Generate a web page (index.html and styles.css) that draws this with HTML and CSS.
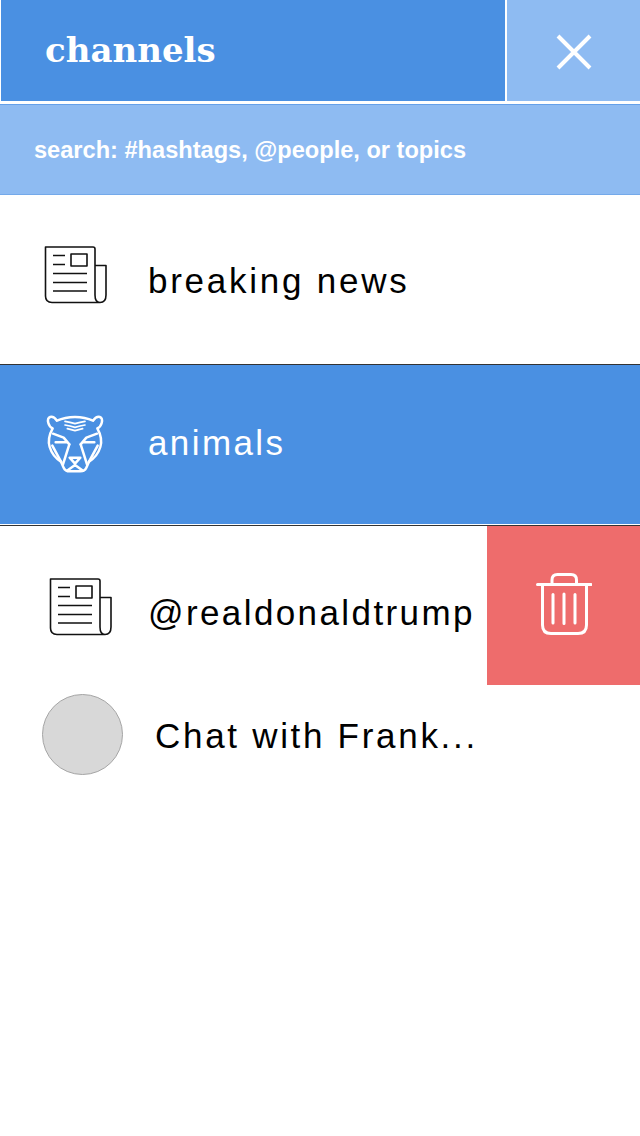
FILE: index.html
```html
<!DOCTYPE html>
<html lang="en">
<head>
    <meta charset="UTF-8">
    <meta name="viewport" content="width=device-width, initial-scale=1.0">
    <title>Channels</title>
    <link rel="stylesheet" href="styles.css">
</head>
<body>

    <header class="top-bar">
        <h1 class="title">channels</h1>
        <button class="close-btn" aria-label="Close">
            <svg width="36" height="36" viewBox="0 0 36 36"><path d="M2 2 L34 34 M34 2 L2 34" stroke="#fff" stroke-width="4" fill="none"/></svg>
        </button>
    </header>

    <div class="search-bar">search: #hashtags, @people, or topics</div>

    <ul class="channel-list">
        <li class="channel channel-news">
            <svg class="icon-news" width="64" height="60" viewBox="0 0 64 60">
                <use href="#news"/>
            </svg>
            <span class="channel-name">breaking news</span>
        </li>
        <li class="channel channel-active">
            <svg class="icon-tiger" width="80" height="75" viewBox="0 0 240 225" fill="none" stroke="#fff" stroke-width="7.5" stroke-linejoin="round" stroke-linecap="round">
                <path d="M66 47 C52 28 34 34 40 54 C42 62 46 67 53 70 C43 88 38 106 44 126 C50 146 62 160 78 170 L86 188 Q91 199 104 199 L136 199 Q149 199 154 188 L162 170 C178 160 190 146 196 126 C202 106 197 88 187 70 C194 67 198 62 200 54 C206 34 188 28 174 47 C142 32 98 32 66 47 Z"/>
                <path d="M90 49 L105 52 L120 56 L135 52 L150 49 M90 60 L105 63 L120 67 L135 63 L150 60 M97 71 L120 77 L143 71" stroke-width="5"/>
                <path d="M54 86 L86 98 L103 118 M186 86 L154 98 L137 118"/>
                <path d="M103 118 L84 178 M137 118 L156 178 M62 112 L94 112 M178 112 L146 112 M52 122 L78 170 M188 122 L162 170"/>
                <path d="M104 158 L136 158 L120 176 Z M96 197 L120 180 L144 197"/>
            </svg>
            <span class="channel-name">animals</span>
        </li>
        <li class="channel channel-swiped">
            <svg class="icon-news" width="64" height="60" viewBox="0 0 64 60">
                <use href="#news"/>
            </svg>
            <span class="channel-name">@realdonaldtrump</span>
            <div class="delete-action">
                <svg width="56" height="62" viewBox="0 0 56 62" fill="none" stroke="#fff" stroke-width="3" stroke-linecap="round" stroke-linejoin="round">
                    <path d="M1.5 11.5 L55 11.5"/>
                    <path d="M16 11.5 L16 7 Q16 1.5 21.5 1.5 L35 1.5 Q40.5 1.5 40.5 7 L40.5 11.5"/>
                    <path d="M6.5 11.5 L6.5 52 Q6.5 60.5 15 60.5 L42 60.5 Q50.5 60.5 50.5 52 L50.5 11.5"/>
                    <path d="M17 21.5 L17 50 M28 21 L28 50.5 M39 21.5 L39 50"/>
                </svg>
            </div>
        </li>
        <li class="channel channel-chat">
            <div class="avatar"></div>
            <span class="channel-name">Chat with Frank...</span>
        </li>
    </ul>

    <svg class="defs" width="0" height="0">
        <defs>
            <g id="news" fill="none" stroke="#111" stroke-width="1.6" stroke-linejoin="round">
                <path d="M51 21.5 L62 21.5 L62 51 Q62 58.5 56 58.5 Q51 58.5 51 51 L51 5 Q51 3 49 3 L1.5 3 L1.5 52 Q1.5 58.5 8 58.5 L56 58.5"/>
                <rect x="27" y="10" width="16" height="12"/>
                <path d="M9 11.5 L21 11.5 M9 20.5 L21 20.5 M9 29.5 L43 29.5 M9 38.5 L43 38.5 M9 47 L43 47"/>
            </g>
        </defs>
    </svg>

</body>
</html>
```

FILE: styles.css
```css
* {
    box-sizing: border-box;
}
body {
    margin: 0;
    background-color: #fff;
    font-family: "Liberation Sans", Arial, sans-serif;
    color: #000;
}
.top-bar {
    display: flex;
    height: 101px;
    margin-left: 1px;
}
.title {
    flex: 1;
    margin: 0;
    padding: 28px 0 0 44px;
    background-color: #4a90e2;
    color: #fff;
    font-family: "DejaVu Serif", serif;
    font-size: 34px;
    font-weight: bold;
    line-height: 45px;
}
.close-btn {
    display: flex;
    align-items: center;
    justify-content: center;
    width: 133px;
    margin: 0 0 0 2px;
    padding: 3px 0 0;
    border: none;
    background-color: #8ebbf2;
}
.search-bar {
    height: 91px;
    margin-top: 3px;
    padding-left: 34px;
    border-top: 1px solid #64a0ea;
    border-bottom: 1px solid #74a9ea;
    background-color: #8ebbf2;
    color: #fff;
    font-size: 23.6px;
    font-weight: bold;
    line-height: 91px;
}
.channel-list {
    margin: 0;
    padding: 0;
    list-style: none;
}
.channel {
    display: flex;
    align-items: center;
    position: relative;
    font-size: 35px;
    letter-spacing: 2.75px;
}
.channel-name {
    display: block;
}
.icon-news,
.icon-tiger {
    flex: none;
}
.channel-news {
    height: 170px;
    padding: 0 0 0 44px;
    border-bottom: 1px solid #333;
}
.channel-news .icon-news {
    margin-bottom: 12px;
}
.channel-news .channel-name {
    margin-top: 3px;
    margin-left: 40px;
}
.channel-active {
    height: 159px;
    padding-left: 35px;
    padding-bottom: 4px;
    background-color: #4a90e2;
    color: #fff;
    letter-spacing: 2.4px;
}
.channel-active .channel-name {
    margin-left: 33px;
}
.channel-swiped {
    height: 161px;
    margin-top: 1px;
    padding-left: 49px;
    border-top: 1px solid #333;
}
.channel-swiped .channel-name {
    margin-top: 14px;
    margin-left: 35px;
    letter-spacing: 2.4px;
}
.delete-action {
    display: flex;
    align-items: center;
    justify-content: center;
    position: absolute;
    top: 0;
    right: 0;
    bottom: 1px;
    width: 153px;
    padding-bottom: 4px;
    background-color: #ee6c6c;
}
.channel-chat {
    height: 96px;
    padding-left: 42px;
}
.channel-chat .channel-name {
    margin-top: 3px;
    margin-left: 32px;
    letter-spacing: 2.7px;
}
.avatar {
    flex: none;
    width: 81px;
    height: 81px;
    border: 1px solid #a5a5a5;
    border-radius: 50%;
    background-color: #d8d8d8;
}
.defs {
    position: absolute;
}
```
